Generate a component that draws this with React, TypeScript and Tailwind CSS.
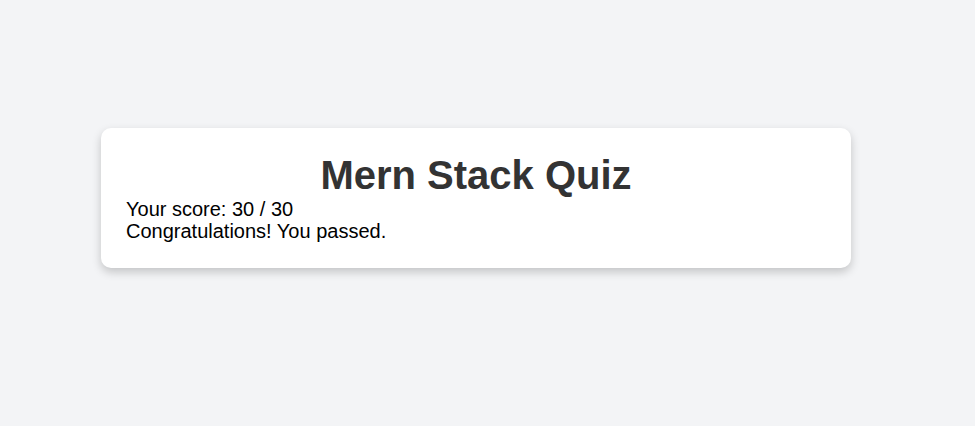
export default function App() {
  return (
    <div className="min-h-[426px] w-full bg-[#f3f4f6] pt-[128px] pl-[101px]" style={{ fontFamily: '"Liberation Sans", Arial, sans-serif' }}>
      <div className="w-[750px] rounded-[10px] bg-white px-[25px] pt-[24px] pb-[25px] shadow-[0_4px_10px_rgba(0,0,0,0.2)]">
        <h1 className="text-center text-[40px] font-bold leading-[46px] text-[#333333]">Mern Stack Quiz</h1>
        <p className="text-[20px] leading-[22px] text-black">Your score: 30 / 30</p>
        <p className="text-[20px] leading-[23px] text-black">Congratulations! You passed.</p>
      </div>
    </div>
  );
}
